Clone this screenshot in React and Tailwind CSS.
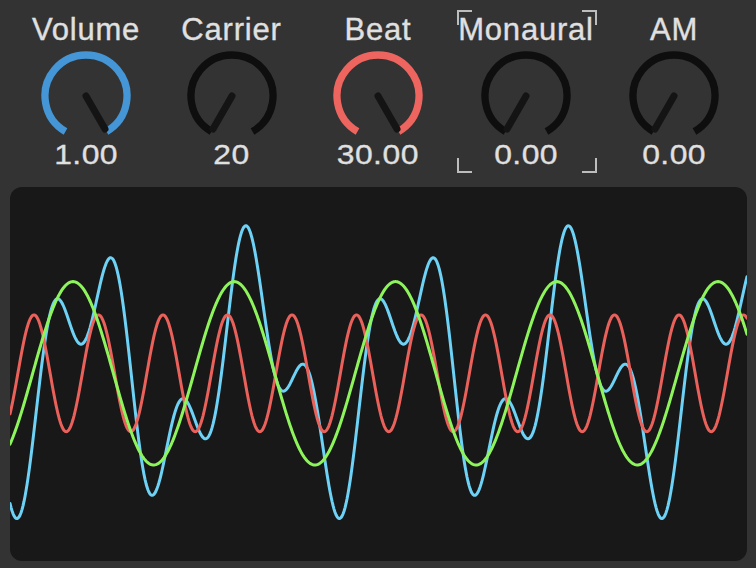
import React from "react";

const W = 737;
const H = 374;
const CY = 186.3;
const TAU = Math.PI * 2;

function makePath(fn) {
  let d = "";
  for (let i = 0; i <= W; i += 1) {
    const X = i + 10;
    d += (i ? "L" : "M") + i + " " + fn(X).toFixed(2) + " ";
  }
  return d;
}

const redPath = makePath((X) => CY - 58.4 * Math.cos((TAU * (X - 34)) / 64.5));
const greenPath = makePath((X) => CY - 91.7 * Math.cos((TAU * (X - 73)) / 161.25));
const bluePath = makePath(
  (X) =>
    CY -
    91.7 * Math.cos((TAU * (X - 90)) / 161.25) -
    58.4 * Math.cos((TAU * (X - 51)) / 64.5)
);

function Knob({ color, max }) {
  const nx = max ? 65 : 27;
  return (
    <svg width="92" height="90" viewBox="0 0 92 90" className="mt-[2.5px] block">
      <path
        d="M25.5 81.5 A41 41 0 1 1 66.5 81.5"
        fill="none"
        stroke={color}
        strokeWidth="7.3"
        strokeLinecap="butt"
      />
      <line
        x1="46"
        y1="46"
        x2={nx}
        y2="79"
        stroke="#141414"
        strokeWidth="7"
        strokeLinecap="round"
      />
    </svg>
  );
}

function Dial({ label, value, color, max, width, brackets }) {
  return (
    <div className={`relative flex flex-col items-center ${width}`}>
      <div className="leading-[35px] text-[31px] tracking-[0.8px] text-[#e0e0e0] whitespace-nowrap [-webkit-text-stroke:0.35px_#e0e0e0]">
        {label}
      </div>
      <Knob color={color} max={max} />
      <div className="mt-[0.5px] leading-[30px] text-[27px] text-[#e0e0e0] whitespace-nowrap [-webkit-text-stroke:0.3px_#e0e0e0]">
        <span className="inline-block scale-x-[1.18] tracking-[0.4px]">{value}</span>
      </div>
      {brackets && (
        <div className="absolute left-[5px] top-[-2px] w-[140px] h-[163px] pointer-events-none">
          <div className="absolute left-0 top-0 w-[15px] h-[15px] border-l-2 border-t-2 border-[#bdbdbd]" />
          <div className="absolute right-0 top-0 w-[15px] h-[15px] border-r-2 border-t-2 border-[#bdbdbd]" />
          <div className="absolute left-0 bottom-0 w-[15px] h-[15px] border-l-2 border-b-2 border-[#bdbdbd]" />
          <div className="absolute right-0 bottom-0 w-[15px] h-[15px] border-r-2 border-b-2 border-[#bdbdbd]" />
        </div>
      )}
    </div>
  );
}

export default function App() {
  return (
    <div
      className="w-[756px] h-[568px] bg-[#333333] overflow-hidden"
      style={{ fontFamily: '"Liberation Sans", Arial, sans-serif' }}
    >
      <div className="flex pl-[13px] pt-[12px]">
        <Dial label="Volume" value="1.00" color="#4496d6" max width="w-[146px]" />
        <Dial label="Carrier" value="20" color="#0e0e0e" width="w-[145px]" />
        <Dial label="Beat" value="30.00" color="#ee6560" max width="w-[148px]" />
        <Dial label="Monaural" value="0.00" color="#0e0e0e" width="w-[148px]" brackets />
        <Dial label="AM" value="0.00" color="#0e0e0e" width="w-[148px]" />
      </div>
      <div className="ml-[10px] mt-[17px] w-[737px] h-[374px] rounded-[12px] bg-[#181818] overflow-hidden">
        <svg width={W} height={H} viewBox={`0 0 ${W} ${H}`} className="block">
          <g fill="none" strokeWidth="3" strokeLinejoin="round" strokeLinecap="round">
            <path d={bluePath} stroke="#6dd2f6" />
            <path d={redPath} stroke="#e9615a" />
            <path d={greenPath} stroke="#8ef45c" />
          </g>
        </svg>
      </div>
    </div>
  );
}
